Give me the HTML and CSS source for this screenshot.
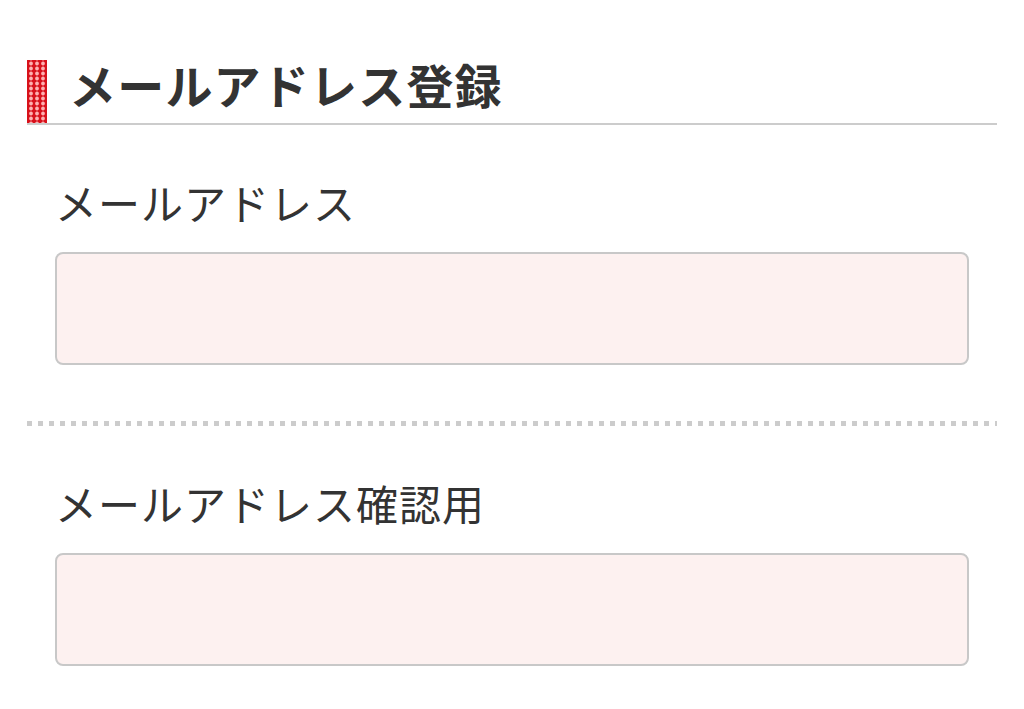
FILE: index.html
```html
<!DOCTYPE html>
<html>
<head>
	<meta charset="utf-8">
	<title>メールアドレス登録</title>

	<link rel="stylesheet" href="styles.css">
</head>
<body>

<div class="form">

	<h2 class="title">メールアドレス登録</h2>

	<div class="field">
		<label for="mail">メールアドレス</label>
		<input type="email" id="mail">
	</div>

	<div class="sep"></div>

	<div class="field">
		<label for="mail2">メールアドレス確認用</label>
		<input type="email" id="mail2">
	</div>

</div>

</body>
</html>
```

FILE: styles.css
```css
*{
	margin: 0;
	padding: 0;
	box-sizing: border-box;
}

body{
	font-family: "Noto Sans CJK JP", "Noto Sans", sans-serif;
	color: #333;
	background: #fff;
}

.form{
	width: 970px;
	margin-left: 27px;
	padding-top: 60px;
}

.title{
	display: flex;
	font-size: 47px;
	font-weight: bold;
	line-height: 47px;
	letter-spacing: 1.2px;
	border-bottom: 2px solid #ccc;
}

.title::before{
	content: "";
	width: 20px;
	height: 63px;
	margin-right: 22px;
	background-color: #d8111b;
	background-image: radial-gradient(circle, rgba(255,185,185,.95) 1.3px, rgba(255,255,255,0) 2.5px);
	background-size: 6px 5px;
	background-position: 1px 1px;
}

.field{
	padding: 56px 28px;
}

.field label{
	display: block;
	font-size: 42px;
	line-height: 42px;
	letter-spacing: 1px;
	margin-bottom: 29px;
}

.field input{
	display: block;
	width: 100%;
	height: 113px;
	border: 2px solid #c8c8c8;
	border-radius: 8px;
	background: #fdf1f0;
	font-size: 40px;
	padding: 0 20px;
	outline: none;
}

.sep{
	height: 5px;
	background-image: linear-gradient(to right, #ccc 5px, transparent 5px);
	background-size: 11px 5px;
}
```
